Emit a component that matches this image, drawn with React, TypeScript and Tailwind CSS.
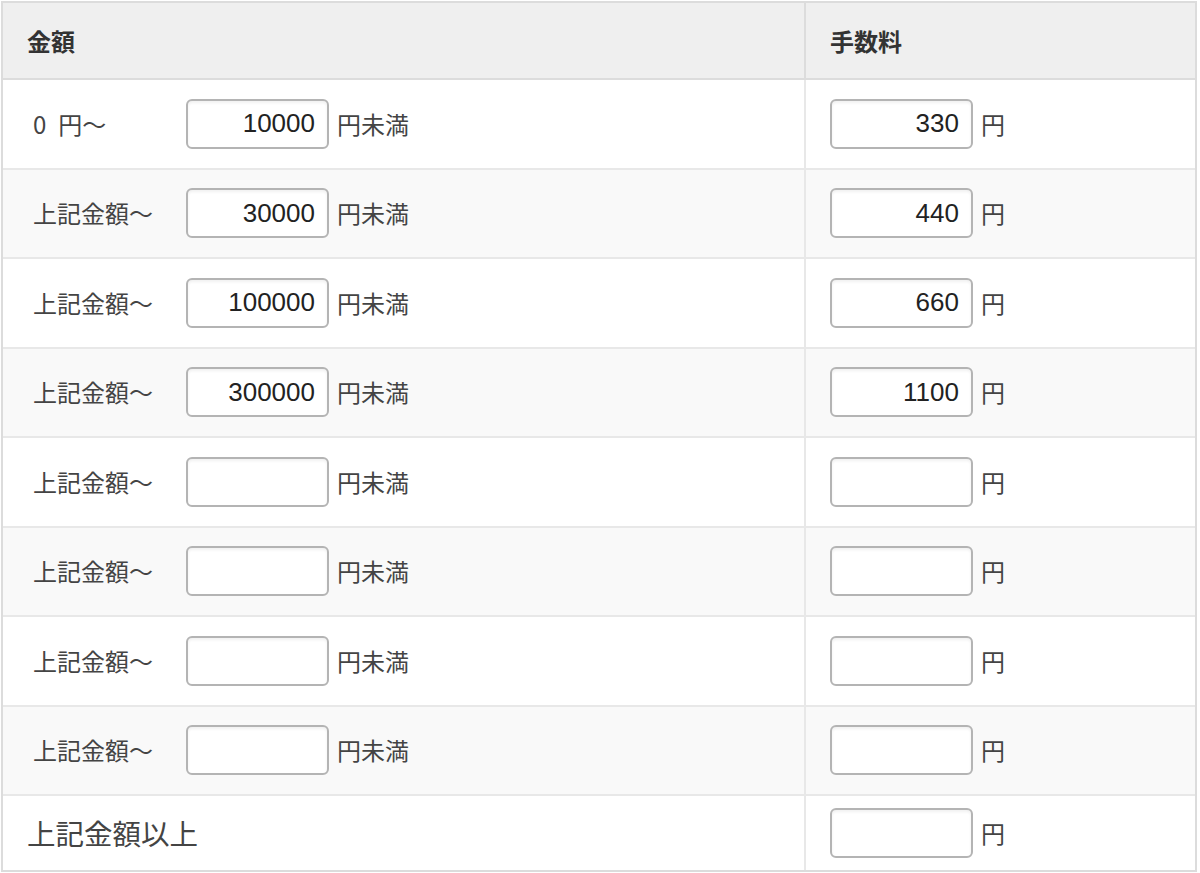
const rows = [
  { label: "0\u2002円〜", amount: "10000", fee: "330" },
  { label: "上記金額〜", amount: "30000", fee: "440" },
  { label: "上記金額〜", amount: "100000", fee: "660" },
  { label: "上記金額〜", amount: "300000", fee: "1100" },
  { label: "上記金額〜", amount: "", fee: "" },
  { label: "上記金額〜", amount: "", fee: "" },
  { label: "上記金額〜", amount: "", fee: "" },
  { label: "上記金額〜", amount: "", fee: "" },
];

const font = "font-['Noto_Sans_CJK_JP','Noto_Sans',sans-serif]";

function NumberBox({ value }: { value: string }) {
  return (
    <input
      type="text"
      defaultValue={value}
      className="w-[143px] h-[50px] shrink-0 rounded-[6px] border-2 border-[#b4b4b4] bg-white px-[12px] text-right text-[26px] text-[#222] shadow-[inset_0_2px_3px_rgba(0,0,0,0.06)] outline-none font-['Liberation_Sans','Noto_Sans_CJK_JP',sans-serif]"
    />
  );
}

export default function App() {
  return (
    <div className={`min-h-[873px] bg-white pl-px pt-px ${font}`}>
      <div className="w-[1196px] border-2 border-[#dcdcdc]">
        {/* 見出し */}
        <div className="flex h-[77px] border-b-2 border-[#dcdcdc] bg-[#efefef] text-[24px] font-bold text-[#333]">
          <div className="flex w-[803px] items-center border-r-2 border-[#dcdcdc] pl-[24px]">金額</div>
          <div className="flex flex-1 items-center pl-[24px]">手数料</div>
        </div>

        {/* 金額帯ごとの手数料 */}
        {rows.map((r, i) => (
          <div
            key={i}
            className={`flex h-[89.5px] border-b-2 border-[#e8e8e8] ${i % 2 === 1 ? "bg-[#f9f9f9]" : "bg-white"}`}
          >
            <div className="flex w-[803px] items-center border-r-2 border-[#e8e8e8]">
              <span className="w-[183px] shrink-0 whitespace-pre pl-[30px] text-[24px] text-[#444]">{r.label}</span>
              <NumberBox value={r.amount} />
              <span className="ml-[8px] text-[24px] text-[#444]">円未満</span>
            </div>
            <div className="flex flex-1 items-center pl-[24px]">
              <NumberBox value={r.fee} />
              <span className="ml-[8px] text-[24px] text-[#444]">円</span>
            </div>
          </div>
        ))}

        {/* 最終行 */}
        <div className="flex h-[74px] bg-white">
          <div className="flex w-[803px] items-center border-r-2 border-[#e8e8e8] pl-[24px] text-[28.5px] text-[#444]">
            上記金額以上
          </div>
          <div className="flex flex-1 items-center pl-[24px]">
            <NumberBox value="" />
            <span className="ml-[8px] text-[24px] text-[#444]">円</span>
          </div>
        </div>
      </div>
    </div>
  );
}
